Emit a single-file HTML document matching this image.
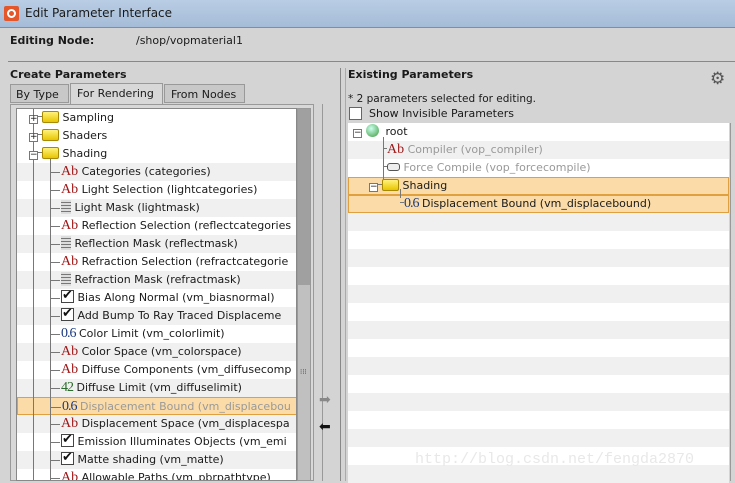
<!DOCTYPE html>
<html><head><meta charset="utf-8"><style>
*{margin:0;padding:0;box-sizing:border-box}
body{width:735px;height:481px;overflow:hidden;background:#d4d4d4;font-family:"DejaVu Sans","Liberation Sans",sans-serif;font-size:11px;color:#1a1a1a;position:relative}
.a{position:absolute}
.title{left:0;top:0;width:735px;height:28px;background:linear-gradient(#b9cde4,#a5bcd8);border-bottom:1px solid #7d8ea5}
.row{position:absolute;height:18px;line-height:18px;white-space:nowrap;overflow:hidden}
.ab{font-family:"Liberation Serif",serif;color:#a01818;font-size:14px}
.num{font-family:"Liberation Serif",serif;color:#1a3a80;font-size:14px;letter-spacing:-1px}
.chk{display:inline-block;width:13px;height:13px;border:1px solid #444;background:#fff;vertical-align:-2px;position:relative}
.chk:after{content:"✔";position:absolute;left:0;top:-4px;font-size:13px;color:#111}
.fold{display:inline-block;width:17px;height:12px;background:linear-gradient(#fff27a,#e8c500);border:1px solid #a88a00;border-radius:2px;vertical-align:-2px}
.pm{display:inline-block;width:9px;height:9px;border:1px solid #777;background:#fff;font-size:9px;line-height:7px;text-align:center;vertical-align:0;position:relative;z-index:3}
.sld{display:inline-block;width:10px;height:14px;background:repeating-linear-gradient(#ddd 0 2px,#777 2px 3px);vertical-align:-3px}
.b{font-weight:bold}
</style></head><body>
<div class="a title"></div>
<div class="a" style="left:4px;top:6px;width:15px;height:15px;background:#e5562a;border-radius:2px"></div>
<div class="a" style="left:7px;top:9px;width:9px;height:9px;border:2px solid #fff;border-radius:50%"></div>
<div class="a" style="left:25px;top:6px;font-size:12px">Edit Parameter Interface</div>
<div class="a b" style="left:10px;top:34px">Editing Node:</div>
<div class="a" style="left:136px;top:34px">/shop/vopmaterial1</div>
<div class="a" style="left:8px;top:61px;width:727px;height:1px;background:#888"></div>
<div class="a b" style="left:10px;top:68px">Create Parameters</div>
<div class="a" style="left:10px;top:84px;width:59px;height:19px;background:#c8c8c8;border:1px solid #999;padding:3px 0 0 5px">By Type</div>
<div class="a" style="left:70px;top:83px;width:93px;height:21px;background:#d8d8d8;border:1px solid #999;border-bottom:none;padding:3px 0 0 6px">For Rendering</div>
<div class="a" style="left:164px;top:84px;width:81px;height:19px;background:#c8c8c8;border:1px solid #999;padding:3px 0 0 6px">From Nodes</div>
<div class="a" style="left:10px;top:104px;width:304px;height:377px;border:1px solid #999;background:#d8d8d8"></div>
<div class="a" style="left:16px;top:108px;width:281px;height:373px;background:#fff;border:1px solid #888;overflow:hidden" id="L"></div>
<div class="a" style="left:297px;top:108px;width:14px;height:373px;background:#c0c0c0;border:1px solid #999"></div>
<div class="a" style="left:298px;top:109px;width:12px;height:176px;background:#a0a0a0"></div>
<div class="a" style="left:300px;top:370px;font-size:7px;line-height:4px;color:#555">⁞⁞⁞</div>
<div class="a" style="left:322px;top:104px;width:1px;height:377px;background:#999"></div>
<div class="a" style="left:340px;top:68px;width:1px;height:413px;background:#888"></div>
<div class="a" style="left:345px;top:68px;width:1px;height:413px;background:#aaa"></div>
<div class="a" style="left:319px;top:392px;font-size:14px;color:#888">➡</div>
<div class="a" style="left:319px;top:419px;font-size:14px;color:#111">⬅</div>
<div class="a b" style="left:348px;top:68px">Existing Parameters</div>
<div class="a" style="left:710px;top:69px;font-size:17px;color:#555">⚙</div>
<div class="a" style="left:348px;top:93px;font-size:10.5px">* 2 parameters selected for editing.</div>
<div class="a" style="left:349px;top:107px;width:13px;height:13px;border:1px solid #666;background:#fff"></div>
<div class="a" style="left:369px;top:107px">Show Invisible Parameters</div>
<div class="a" style="left:348px;top:123px;width:381px;height:358px;background:#fff" id="R"></div>
<div class="a" style="left:730px;top:123px;width:5px;height:358px;background:#d4d4d4;border-left:1px solid #999"></div>
<div class="a" style="left:415px;top:451px;font-family:'Liberation Mono',monospace;font-size:15px;color:#e8e8e8">http://blog.csdn.net/fengda2870</div>
<script>
var L=document.getElementById('L'),R=document.getElementById('R');
var items=[
[1,'f','Sampling','+'],[1,'f','Shaders','+'],[1,'f','Shading','−'],
[2,'ab','Categories (categories)'],[2,'ab','Light Selection (lightcategories)'],[2,'s','Light Mask (lightmask)'],
[2,'ab','Reflection Selection (reflectcategories'],[2,'s','Reflection Mask (reflectmask)'],[2,'ab','Refraction Selection (refractcategorie'],
[2,'s','Refraction Mask (refractmask)'],[2,'c','Bias Along Normal (vm_biasnormal)'],[2,'c','Add Bump To Ray Traced Displaceme'],
[2,'n','Color Limit (vm_colorlimit)'],[2,'ab','Color Space (vm_colorspace)'],[2,'ab','Diffuse Components (vm_diffusecomp'],
[2,'i','Diffuse Limit (vm_diffuselimit)'],[2,'n','Displacement Bound (vm_displacebou',0,1],[2,'ab','Displacement Space (vm_displacespa'],
[2,'c','Emission Illuminates Objects (vm_emi'],[2,'c','Matte shading (vm_matte)'],[2,'ab','Allowable Paths (vm_pbrpathtype)']];
function icon(t){return t=='ab'?'<span class="ab">Ab</span>':t=='n'?'<span class="num">0.6</span>':t=='i'?'<span class="num" style="color:#2a6a2a">42</span>':t=='c'?'<span class="chk"></span>':t=='s'?'<span class="sld"></span>':'<span class="fold"></span>';}
var h='';
items.forEach(function(it,i){var y=i*18;var bg=it[4]?'#fbdca8':(i%2?'#f0f0f0':'#fff');
var bd=it[4]?'border:1px solid #e0a040;':'';
var x=it[0]==1?12:44;
h+='<div class="row" style="left:0;top:'+y+'px;width:281px;background:'+bg+';'+bd+'">';
if(it[0]==1){h+='<span class="a" style="left:'+x+'px;top:0;z-index:3"><span class="pm">'+it[3]+'</span><span style="display:inline-block;width:4px;height:1px;background:#777;vertical-align:4px"></span>'+icon('f')+' '+it[2]+'</span>';}
else{h+='<span class="a" style="left:33px;top:9px;width:10px;height:1px;background:#777"></span><span class="a" style="left:'+x+'px;top:0;'+(it[4]?'color:#999':'')+'">'+icon(it[1])+' '+it[2]+'</span>';}
h+='</div>';});
h+='<div class="a" style="left:16px;top:0;width:1px;height:373px;background:#777;z-index:1"></div>';
h+='<div class="a" style="left:33px;top:45px;width:1px;height:330px;background:#777"></div>';
L.innerHTML=h;
var rows=L.querySelectorAll('.row');for(var k=0;k<3;k++)rows[k].style.zIndex=2,rows[k].style.background='transparent',rows[k].style.overflow='visible';
var r='';
for(var i=0;i<20;i++){r+='<div class="row" style="left:0;top:'+(i*18)+'px;width:381px;background:'+(i%2?'#f0f0f0':'#fff')+'"></div>';}
r+='<div class="row" style="left:0;top:54px;width:381px;background:#fbdca8;border:1px solid #e0a040"></div>';
r+='<div class="row" style="left:0;top:72px;width:381px;background:#fbdca8;border:1px solid #e0a040"></div>';
r+='<div class="row" style="left:5px;top:0"><span class="pm">−</span> <span style="display:inline-block;width:13px;height:13px;border-radius:50%;background:radial-gradient(circle at 40% 35%,#cfe,#3a9a3a);vertical-align:-2px"></span>&nbsp; root</div>';
r+='<div class="a" style="left:35px;top:14px;width:1px;height:50px;background:#777"></div>';
r+='<div class="row" style="left:35px;top:18px;color:#999"><span style="display:inline-block;width:4px;height:1px;background:#777;vertical-align:4px"></span><span class="ab">Ab</span> Compiler (vop_compiler)</div>';
r+='<div class="row" style="left:35px;top:36px;color:#999"><span style="display:inline-block;width:4px;height:1px;background:#777;vertical-align:4px"></span><span style="display:inline-block;width:13px;height:8px;border:1px solid #555;border-radius:3px;background:#eee"></span> Force Compile (vop_forcecompile)</div>';
r+='<div class="row" style="left:21px;top:54px"><span class="pm">−</span><span style="display:inline-block;width:4px;height:1px;background:#777;vertical-align:4px"></span><span class="fold"></span> Shading</div>';
r+='<div class="a" style="left:52px;top:66px;width:1px;height:9px;background:#777"></div>';
r+='<div class="row" style="left:52px;top:72px"><span style="display:inline-block;width:4px;height:1px;background:#777;vertical-align:4px"></span><span class="num">0.6</span> Displacement Bound (vm_displacebound)</div>';
R.innerHTML=r;
</script>
</body></html>
